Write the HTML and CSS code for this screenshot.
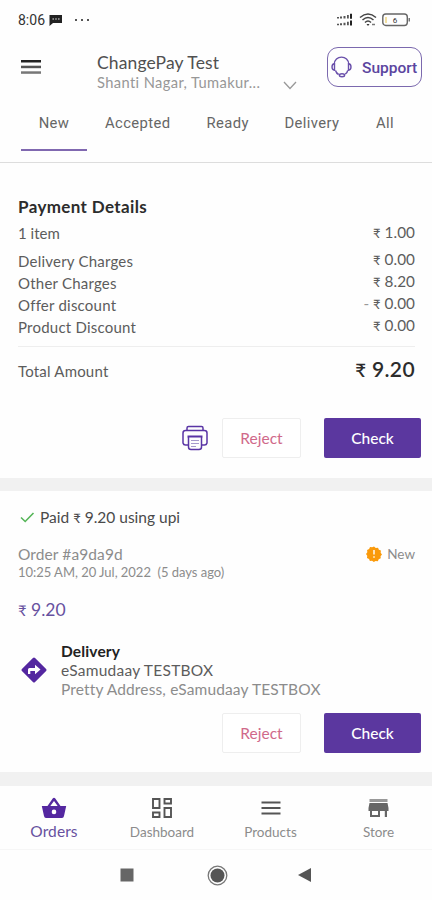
FILE: index.html
```html
<!DOCTYPE html>
<html lang="en">
<head>
<meta charset="utf-8">
<title>Orders</title>
<link rel="stylesheet" href="styles.css">
</head>
<body>
<div class="status">
  <span class="clock">8:06</span>
  <svg class="chat" width="14" height="12" viewBox="0 0 14 12"><path d="M.5 1h12.500v8H4l-3.500 3z" fill="#222"/><path d="M3.500 5h1.400M6.300 5h1.400M9.100 5h1.400" stroke="#fff" stroke-width="1.200"/></svg>
  <svg class="dots" width="16" height="4" viewBox="0 0 16 4"><path d="M1 1h2v2H1zM7 1h2v2H7zM13 1h2v2h-2z" fill="#555"/></svg>
  <svg class="signal" width="17" height="14" viewBox="0 0 17 14"><g fill="#555"><path d="M1 4h2v1.500H1zM4 3.500h2v2H4zM7.500 3h2v2.500h-2zM11 2h1.800v3.500H11zM1 10.800h2v1.500H1zM4 10.300h2v2H4zM7.500 9.800h2v2.500h-2zM11 8.800h1.800v3.500H11z"/><path d="M14 .8h2v4.900h-2zM14 7.600h2v4.900h-2z" fill="#222"/></g></svg>
  <svg class="wifi" width="18" height="14" viewBox="0 0 18 14" fill="none" stroke="#444" stroke-width="1.500"><path d="M1 4.500Q9-2.500 17 4.500M3.500 7Q9 2 14.500 7M6 9.500Q9 6.500 12 9.500"/><path d="M7.500 11h3L9 13z" fill="#333" stroke="none"/><path d="M13 11.500h3" stroke="#777"/></svg>
  <svg class="battery" width="29" height="14" viewBox="0 0 29 14"><rect x=".8" y="1" width="24.500" height="11.500" rx="3" fill="none" stroke="#666" stroke-width="1.400"/><path d="M3 4h2v6H3z" fill="#f3e0a0"/><path d="M26.500 5h1.500v3.500h-1.500z" fill="#777"/><text x="13" y="10" text-anchor="middle" class="level">6</text></svg>
</div>
<header class="header">
  <svg class="menu" width="20" height="15" viewBox="0 0 20 15"><path d="M0 0h20v2.500H0z" fill="#222"/><path d="M0 5.700h20v2.500H0z" fill="#555"/><path d="M0 11.300h20v2.500H0z" fill="#777"/></svg>
  <div class="shop"><div class="shop-name">ChangePay Test</div><div class="shop-addr">Shanti Nagar, Tumakur...</div></div>
  <svg class="chev" width="14" height="9" viewBox="0 0 14 9"><path d="M1 1l6 6.500L13 1" fill="none" stroke="#999" stroke-width="1.300"/></svg>
  <div class="support">
    <svg width="21" height="22" viewBox="0 0 21 22" fill="none" stroke="#6a50ab" stroke-width="1.400"><path d="M3.200 8.500C3.200-1.300 17.800-1.300 17.800 8.500"/><path d="M3.500 7.800Q1 8 1 11t2.500 3.200zM17.500 7.800q2.500.2 2.500 3.200t-2.500 3.200zM4.500 14.500q.8 3 3.200 4M16.700 14.500q-.5 2.500-2.500 3.700"/><ellipse cx="11" cy="19.300" rx="2.600" ry="1.500"/></svg>
    <span>Support</span>
  </div>
</header>
<nav class="tabs">
  <span class="tab t-new">New</span><span class="tab t-acc">Accepted</span><span class="tab t-ready">Ready</span><span class="tab t-del">Delivery</span><span class="tab t-all">All</span>
</nav>
<section class="payment">
  <h2 class="pay-title">Payment Details</h2>
  <div class="row item"><span>1 item</span><b><small>₹</small> 1.00</b></div>
  <div class="row"><span>Delivery Charges</span><b><small>₹</small> 0.00</b></div>
  <div class="row"><span>Other Charges</span><b><small>₹</small> 8.20</b></div>
  <div class="row"><span>Offer discount</span><b><i>-</i> <small>₹</small> 0.00</b></div>
  <div class="row"><span>Product Discount</span><b><small>₹</small> 0.00</b></div>
  <div class="total"><span>Total Amount</span><strong><small>₹</small> 9.20</strong></div>
  <div class="actions">
    <svg width="26" height="26" viewBox="0 0 26 26" fill="none" stroke="#5a35a5" stroke-width="1.500"><path d="M5 5.500V3q0-1.500 1.500-1.500h13Q21 1.500 21 3v2.500"/><path d="M6 20H3.500Q1.500 20 1 18V8q0-2.500 2.500-2.500h19Q25 5.500 25 8v10q-.5 2-2.500 2H20"/><path d="M5.500 11.500h15" stroke-width="2"/><path d="M6.500 12v10q0 2.500 2.500 2.500h8q2.500 0 2.500-2.500V12"/><path d="M9 15.500h8M9 18.500h8M9 21.500h5" stroke="#a69acc" stroke-width="1.200"/></svg>
    <button class="reject">Reject</button><button class="check">Check</button>
  </div>
</section>
<div class="band"></div>
<section class="order">
  <div class="paid"><svg width="15" height="11" viewBox="0 0 15 11"><path d="M1 5.500l4.200 4L13.500 1" fill="none" stroke="#55b558" stroke-width="1.600"/></svg><span>Paid <small>₹</small> 9.20 using upi</span></div>
  <div class="order-head"><span class="order-id">Order #a9da9d</span>
    <span class="state"><svg width="16" height="16" viewBox="0 0 18 18"><path d="M9 .7l2 1.500 2.500-.3 1 2.300 2.300 1-.3 2.500L18 9.500l-1.600 2 .2 2.400-2.300 1-1 2.200-2.500-.3-2 1.200-2-1.500-2.400.3-1-2.300-2.300-1 .3-2.500L0 9l1.500-2-.3-2.500 2.300-1 1-2.300 2.500.3z" fill="#fa9a0b"/><path d="M8.200 4.500h1.600v5.200H8.200zM8.200 11.500h1.600v1.600H8.200z" fill="#fff"/></svg>New</span></div>
  <div class="time">10:25 AM, 20 Jul, 2022&nbsp; (5 days ago)</div>
  <div class="price"><small>₹</small> 9.20</div>
  <div class="delivery">
    <svg width="28" height="28" viewBox="0 0 28 28"><rect x="4.700" y="4.700" width="18.600" height="18.600" rx="1.500" transform="rotate(45 14 14)" fill="#5427a0"/><path d="M8 18v-4.500q0-1.500 1.500-1.500H15V8.700l5.500 4.800-5.500 4.800V15h-4.700v3z" fill="#fff"/></svg>
    <div><div class="d1">Delivery</div><div class="d2">eSamudaay TESTBOX</div><div class="d3">Pretty Address, eSamudaay TESTBOX</div></div>
  </div>
  <div class="actions second"><button class="reject">Reject</button><button class="check">Check</button></div>
</section>
<div class="band low"></div>
<nav class="bottom">
  <div class="dest active"><svg width="26" height="24" viewBox="0 0 26 24"><path d="M.8 10h5.700L11.700 2.500q1.300-1.500 2.600 0L19.500 10h5.700L23 20q-.4 2-2 2H5q-1.600 0-2-2zM9.300 10h7.400L13 5z" fill="#5427a0" fill-rule="evenodd"/><circle cx="13" cy="15.900" r="2.300" fill="#fff"/></svg><span>Orders</span></div>
  <div class="dest"><svg width="22" height="24" viewBox="0 0 22 24" fill="none" stroke="#555" stroke-width="1.900"><path d="M2 3h6.500v9H2zM13.500 3H20v4.500h-6.500zM2 16.500h6.500V21H2zM13.500 12H20v9h-6.500z"/></svg><span>Dashboard</span></div>
  <div class="dest prod"><svg width="22" height="24" viewBox="0 0 22 24"><path d="M1.500 6.500h19M1.500 12h19M1.500 17.500h19" stroke="#555" stroke-width="2"/></svg><span>Products</span></div>
  <div class="dest store"><svg width="22" height="24" viewBox="0 0 22 24"><path d="M1.500 3h18v3h-18z" fill="#999"/><path d="M1.500 7h18l1 5v3H19v6h-2.200v-6H12v6H2v-6H.5v-3zM4 15v4h6v-4z" fill="#666" fill-rule="evenodd"/></svg><span>Store</span></div>
</nav>
<footer class="system">
  <svg width="14" height="14" viewBox="0 0 14 14"><path d="M.5.500h13v13H.5z" fill="#666"/></svg>
  <svg class="home" width="21" height="21" viewBox="0 0 21 21"><circle cx="10.500" cy="10.500" r="9.300" fill="none" stroke="#777" stroke-width="1.300"/><circle cx="10.500" cy="10.500" r="7" fill="#555"/></svg>
  <svg class="back" width="14" height="16" viewBox="0 0 14 16"><path d="M0 8L13 1v14z" fill="#555"/></svg>
</footer>
</body>
</html>
```
FILE: styles.css
```css
* { box-sizing: border-box; }
body { margin: 0; width: 432px; height: 900px; overflow: hidden; background: #fefefe; font-family: Lato, "Noto Sans", sans-serif; color: #5c5c5c; white-space: nowrap; }
svg { display: block; flex: none; }
small { font-size: .84em; }
.status { display: flex; align-items: center; height: 38px; padding: 1px 21px 0 18px; }
.clock { font: 400 14px Roboto, sans-serif; color: #333; width: 31px; }
.dots { margin-left: 11px; }
.signal { margin-left: auto; }
.wifi { margin-left: 6px; }
.battery { margin-left: 5px; }
.level { font: 8px Roboto, sans-serif; fill: #333; }
.header { display: flex; height: 66px; padding: 9px 9px 0 21px; align-items: flex-start; }
.menu { margin-top: 13px; }
.shop { margin: 5px 0 0 56px; width: 187px; }
.shop-name { font-size: 17.500px; line-height: 21px; letter-spacing: .12px; color: #505050; }
.shop-addr { font-size: 14.700px; line-height: 19px; letter-spacing: .38px; color: #979797; }
.chev { margin: 34px 0 0 -1px; }
.support { display: flex; align-items: center; margin: 0 1px 0 auto; width: 95px; height: 40px; padding-left: 3px; border: 1px solid #7b69ae; border-radius: 11px; color: #5b459f; font: 500 15.500px Roboto, sans-serif; }
.support span { margin: 1px 0 0 10px; letter-spacing: 0; }
.tabs { display: flex; height: 59px; border-bottom: 1px solid #ddd; padding: 0 21px; font: 400 14.800px/39px Roboto, sans-serif; color: #666; letter-spacing: .38px; }
.tab { flex: none; }
.t-new { width: 66px; height: 47px; border-bottom: 2px solid #8068b0; text-align: center; }
.t-acc { margin-left: 18px; width: 101.500px; }
.t-ready { width: 78px; }
.t-del { width: 91.500px; }
.payment { height: 315px; padding: 32px 17px 0 18px; }
.pay-title { margin: 0; height: 24px; font-size: 17px; line-height: 24px; font-weight: 700; color: #2c2c2c; letter-spacing: .37px; }
.row { display: flex; justify-content: space-between; height: 22px; font-size: 15px; line-height: 24px; letter-spacing: .22px; }
.row.item { height: 30px; line-height: 28px; letter-spacing: 0; }
.row b { font-weight: 400; font-size: 15.300px; margin-top: -2px; letter-spacing: .05px; }
.row.item b { margin-top: -1px; }
.row i { font-style: normal; color: #999; }
.total { display: flex; justify-content: space-between; height: 72px; border-top: 1px solid #eee; margin-top: 9px; font-size: 15px; line-height: 49px; letter-spacing: .2px; }
.total strong { font-size: 21px; font-weight: 600; color: #2c2c2c; line-height: 44px; letter-spacing: .4px; }
.total small { font-size: 18.500px; }
.actions { display: flex; align-items: center; justify-content: flex-end; margin-right: -6px; height: 40px; }
.actions svg { margin-right: 14px; }
button { height: 40px; padding: 0; font: 400 15.500px Lato, sans-serif; border-radius: 2px; }
.reject { width: 79px; border: 1px solid #eee; background: #fff; color: #d0698a; }
.check { width: 97px; margin-left: 23px; border: 0; background: #5b379f; color: #fff; font-weight: 500; }
.band { height: 13px; background: #f1f1f1; }
.order { height: 281px; padding: 14px 17px 0 18px; }
.paid { display: flex; align-items: center; height: 23px; padding-left: 2px; font-size: 15.500px; color: #4a4a4a; }
.paid svg { margin-top: 2px; }
.paid span { margin-left: 5px; }
.order-head { display: flex; justify-content: space-between; height: 20px; margin-top: 16px; line-height: 20px; font-size: 15.500px; letter-spacing: .1px; color: #8c8c8c; }
.state { display: flex; align-items: center; font-size: 13.500px; gap: 5px; letter-spacing: 0; }
.time { height: 18px; font-size: 13px; line-height: 16px; color: #8c8c8c; letter-spacing: -.03px; }
.price { height: 30px; margin-top: 12px; font-size: 17.500px; line-height: 32px; color: #67519f; }
.delivery { display: flex; height: 57px; margin-top: 18px; padding-left: 2px; align-items: center; gap: 13px; }
.delivery svg { margin-top: -2px; }
.d1, .d2, .d3 { line-height: 19px; font-size: 15.500px; letter-spacing: .14px; }
.d1 { font-weight: 700; color: #222; }
.d2 { letter-spacing: .25px; }
.d3 { color: #8c8c8c; }
.second { margin-top: 14px; }
.low { height: 14px; }
.bottom { display: flex; height: 64px; border-bottom: 1px solid #f6f6f6; }
.dest { width: 108px; display: flex; flex-direction: column; align-items: center; padding-top: 10px; font-size: 13.500px; line-height: 24px; color: #8c8c8c; }
.prod, .store { padding-left: 1px; }
.active { color: #67519f; font-size: 15.500px; line-height: 23px; letter-spacing: .1px; }
.system { display: flex; align-items: center; height: 50px; padding-left: 120px; }
.home { margin-left: 73px; }
.back { margin-left: 70px; }
```
